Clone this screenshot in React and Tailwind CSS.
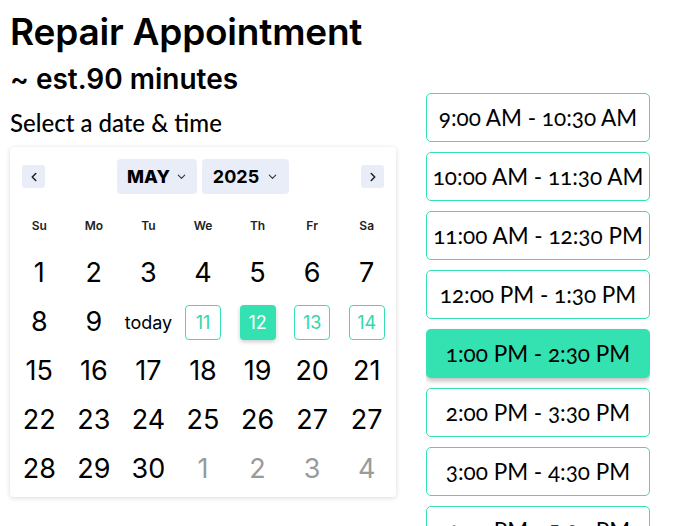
import React from "react";

const weekdays = ["Su", "Mo", "Tu", "We", "Th", "Fr", "Sa"];
const rows = [
  ["1", "2", "3", "4", "5", "6", "7"],
  ["8", "9", "today", "11", "12", "13", "14"],
  ["15", "16", "17", "18", "19", "20", "21"],
  ["22", "23", "24", "25", "26", "27", "27"],
  ["28", "29", "30", "1", "2", "3", "4"],
];

const slots = [
  "9:00 AM - 10:30 AM",
  "10:00 AM - 11:30 AM",
  "11:00 AM - 12:30 PM",
  "12:00 PM - 1:30 PM",
  "1:00 PM - 2:30 PM",
  "2:00 PM - 3:30 PM",
  "3:00 PM - 4:30 PM",
  "4:00 PM - 5:30 PM",
];

function Chevron({ dir }) {
  const d = dir === "left" ? "M10 4 L6 8 L10 12" : "M6 4 L10 8 L6 12";
  return (
    <svg width="14" height="14" viewBox="0 0 16 16" fill="none" stroke="#222" strokeWidth="1.8" strokeLinecap="round" strokeLinejoin="round">
      <path d={d} />
    </svg>
  );
}

function Down() {
  return (
    <svg width="11" height="11" viewBox="0 0 12 12" fill="none" stroke="#333" strokeWidth="1.2" strokeLinecap="round" strokeLinejoin="round">
      <path d="M2.5 4.5 L6 8 L9.5 4.5" />
    </svg>
  );
}

function Cell({ v, r, c }) {
  if (v === "today") {
    return <span className="text-[18px] font-normal text-black">today</span>;
  }
  if (r === 1 && c >= 3) {
    const sel = v === "12";
    return (
      <span
        className={
          sel
            ? "w-[36px] h-[35px] flex items-center justify-center rounded-[4px] bg-[#33e1b1] text-white text-[18px] shadow-[0_2px_4px_rgba(0,0,0,0.2)]"
            : "w-[36px] h-[35px] flex items-center justify-center rounded-[4px] border border-[#33e1b1] text-[#33d6a8] text-[18px]"
        }
      >
        {v}
      </span>
    );
  }
  const gray = r === 4 && c >= 3;
  return <span className={gray ? "text-[27px] text-[#9a9a9a]" : "text-[27px] text-black"}>{v}</span>;
}

export default function App() {
  return (
    <div className="w-[688px] h-[526px] overflow-hidden bg-white flex pl-[10px] gap-[30px]" style={{ fontFamily: "Inter, sans-serif" }}>
      <div className="w-[386px] flex flex-col shrink-0">
        <h1 className="text-[37px] font-semibold leading-none mt-[13px] mb-[1px] text-black tracking-[-0.2px]">Repair Appointment</h1>
        <h2 className="text-[28px] font-semibold leading-none mt-[14px] text-black">~ est.90 minutes</h2>
        <p className="text-[24px] font-medium leading-none mt-[18px] text-black" style={{ fontFamily: "Lato, sans-serif" }}>
          Select a date &amp; time
        </p>
        <div className="mt-[12px] bg-white rounded-[4px] shadow-[0_1px_5px_rgba(0,0,0,0.15)] pb-[3px]">
          <div className="flex items-center justify-between px-[12px] pt-[12px]">
            <button className="w-[23px] h-[23px] rounded-[3px] bg-[#e9edf8] flex items-center justify-center">
              <Chevron dir="left" />
            </button>
            <div className="flex gap-[5px]">
              <div className="w-[80px] h-[35px] rounded-[4px] bg-[#e9edf8] flex items-center justify-center gap-[6px]">
                <span className="text-[18px] font-extrabold text-black">MAY</span>
                <Down />
              </div>
              <div className="w-[87px] h-[35px] rounded-[4px] bg-[#e9edf8] flex items-center justify-center gap-[8px]">
                <span className="text-[18px] font-bold text-black">2025</span>
                <Down />
              </div>
            </div>
            <button className="w-[23px] h-[23px] rounded-[3px] bg-[#e9edf8] flex items-center justify-center">
              <Chevron dir="right" />
            </button>
          </div>
          <div className="grid grid-cols-7 px-[2px] mt-[20px] h-[24px] items-center">
            {weekdays.map((w) => (
              <span key={w} className="text-center text-[12px] font-semibold text-[#222]">{w}</span>
            ))}
          </div>
          <div className="grid grid-cols-7 px-[2px] mt-[11px]">
            {rows.map((row, r) =>
              row.map((v, c) => (
                <div key={r + "-" + c} className="h-[49px] flex items-center justify-center">
                  <Cell v={v} r={r} c={c} />
                </div>
              ))
            )}
          </div>
        </div>
      </div>
      <div className="w-[224px] shrink-0 mt-[80px] h-[446px] overflow-hidden">
        <div className="flex flex-col gap-[10px] pt-[13px]" style={{ fontFamily: "Lato, sans-serif" }}>
          {slots.map((s) => {
            const sel = s === "1:00 PM - 2:30 PM";
            return (
              <div
                key={s}
                className={
                  sel
                    ? "h-[49px] shrink-0 rounded-[5px] bg-[#33e1b1] flex items-center justify-center text-[22.5px] text-black shadow-[0_3px_5px_rgba(0,0,0,0.25)] [font-variant-numeric:oldstyle-nums]"
                    : "h-[49px] shrink-0 rounded-[5px] border border-[#33e1b1] bg-white flex items-center justify-center text-[22.5px] text-black [font-variant-numeric:oldstyle-nums]"
                }
              >
                {s}
              </div>
            );
          })}
        </div>
      </div>
    </div>
  );
}
